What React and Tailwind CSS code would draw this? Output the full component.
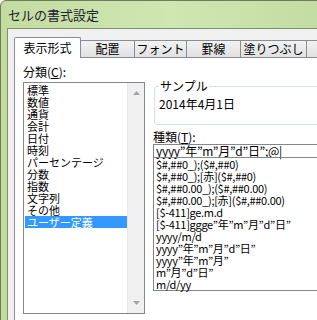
export default function App() {
  const cats = ["標準", "数値", "通貨", "会計", "日付", "時刻", "パーセンテージ", "分数", "指数", "文字列", "その他", "ユーザー定義"];
  const formats = [
    "$#,##0_);($#,##0)",
    "$#,##0_);[赤]($#,##0)",
    "$#,##0.00_);($#,##0.00)",
    "$#,##0.00_);[赤]($#,##0.00)",
    "[$-411]ge.m.d",
    "[$-411]ggge\u201d年\u201dm\u201d月\u201dd\u201d日\u201d",
    "yyyy/m/d",
    "yyyy\u201d年\u201dm\u201d月\u201dd\u201d日\u201d",
    "yyyy\u201d年\u201dm\u201d月\u201d",
    "m\u201d月\u201dd\u201d日\u201d",
    "m/d/yy",
  ];
  const font = { fontFamily: '"Noto Sans CJK JP", sans-serif' };
  return (
    <div className="w-[317px] h-[320px] overflow-hidden bg-white text-[12px] text-black" style={font}>
      <div className="w-[340px] h-[340px] rounded-tl-[6px] border border-[#6d7d5c] bg-gradient-to-r from-[#c3dca0] via-[#d0e6b3] to-[#c2dba0] flex flex-col">
        <div className="h-[27px] flex items-center pl-[7px] text-[13px] text-[#1a2230]">セルの書式設定</div>
        <div className="flex-1 flex pl-[6px]">
          <div className="flex-1 border-l border-t border-[#7f8f6e] bg-[#f0f0f0] pl-[6px] pt-[8px] flex flex-col">
            <div className="h-[20px] flex items-end">
              <div className="relative z-10 w-[67px] h-[21px] -mb-px bg-white border border-b-0 border-[#898c95] rounded-t-[2px] flex items-center justify-center pb-[1px]">表示形式</div>
              <div className="w-[54px] h-[17px] border border-l-0 border-b-0 border-[#898c95] bg-gradient-to-b from-[#f2f2f2] to-[#e1e1e1] flex items-center justify-center">配置</div>
              <div className="w-[52px] h-[17px] border border-l-0 border-b-0 border-[#898c95] bg-gradient-to-b from-[#f2f2f2] to-[#e1e1e1] flex items-center justify-center">フォント</div>
              <div className="w-[54px] h-[17px] border border-l-0 border-b-0 border-[#898c95] bg-gradient-to-b from-[#f2f2f2] to-[#e1e1e1] flex items-center justify-center">罫線</div>
              <div className="w-[66px] h-[17px] border border-l-0 border-b-0 border-[#898c95] bg-gradient-to-b from-[#f2f2f2] to-[#e1e1e1] flex items-center justify-center">塗りつぶし</div>
              <div className="w-[40px] h-[17px] border border-l-0 border-b-0 border-[#898c95] bg-gradient-to-b from-[#f2f2f2] to-[#e1e1e1]"></div>
            </div>
            <div className="flex-1 border-l border-t border-[#898c95] bg-white flex pl-[8px] pt-[7px]">
              <div className="w-[122px] flex flex-col">
                <div className="h-[17px] leading-[14px]">分類(<span className="underline">C</span>):</div>
                <div className="h-[232px] border border-[#828790] flex">
                  <div className="flex-1 pl-[1px] pt-[1px] flex flex-col">
                    {cats.map((c, i) => (
                      <div key={c} className={"h-[12px] leading-[12px] text-[11px] pl-[2px] whitespace-nowrap " + (i === cats.length - 1 ? "bg-[#3399ff] text-white" : "")}>{c}</div>
                    ))}
                  </div>
                  <div className="w-[17px] bg-[#f0f0f0] border-l border-[#e6e6e6] flex flex-col items-center justify-between py-[8px]">
                    <svg width="7" height="4" viewBox="0 0 7 4"><path d="M0 4 L3.5 0 L7 4Z" fill="#a3a3a3" /></svg>
                    <svg width="7" height="4" viewBox="0 0 7 4"><path d="M0 0 L3.5 4 L7 0Z" fill="#a3a3a3" /></svg>
                  </div>
                </div>
              </div>
              <div className="ml-[8px] w-[200px] flex flex-col pt-[15px]">
                <fieldset className="border border-[#d5dfe5] rounded-[3px] h-[45px] pl-[4px] ml-[1px]">
                  <legend className="px-[1px] leading-[12px]">サンプル</legend>
                  <div className="pt-[6px] leading-[12px]">2014年4月1日</div>
                </fieldset>
                <div className="mt-[6px] h-[13px] leading-[12px]">種類(<span className="underline">T</span>):</div>
                <div className="h-[13px] border border-[#828790] border-b-0 pl-[2px] leading-[12px] text-[12px] tracking-[-0.3px] whitespace-nowrap">yyyy{"\u201d"}年{"\u201d"}m{"\u201d"}月{"\u201d"}d{"\u201d"}日{"\u201d"};@|</div>
                <div className="border border-[#828790] pl-[2px] flex flex-col">
                  {formats.map((f) => (
                    <div key={f} className="h-[12px] leading-[12px] text-[11px] whitespace-nowrap tracking-[-0.3px]">{f}</div>
                  ))}
                </div>
              </div>
            </div>
          </div>
        </div>
      </div>
    </div>
  );
}
